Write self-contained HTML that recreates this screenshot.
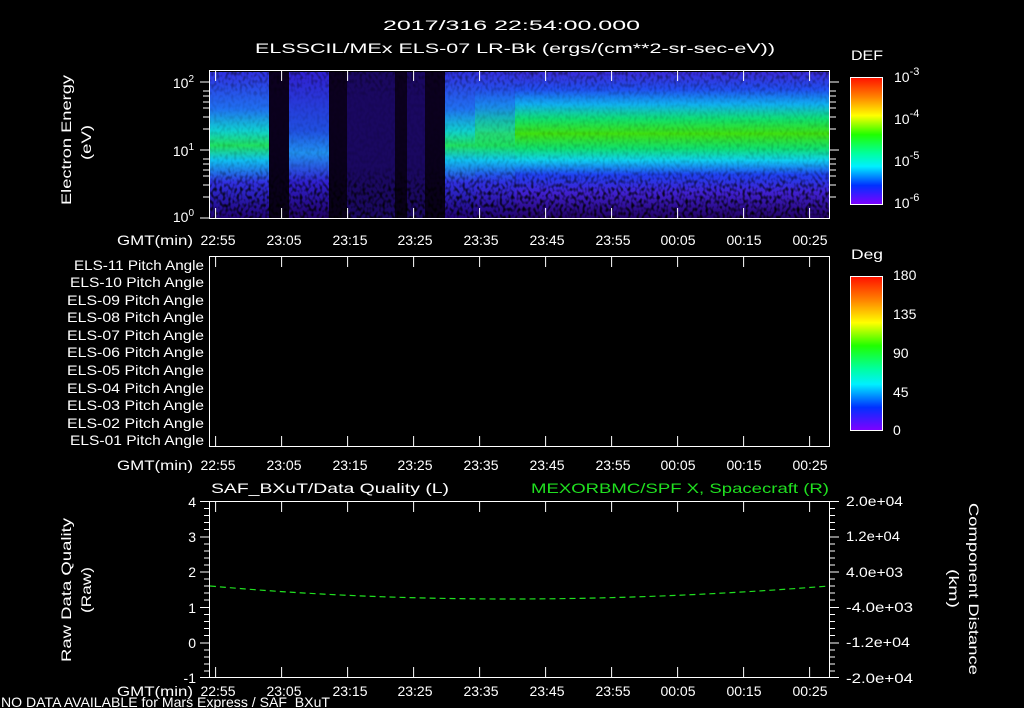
<!DOCTYPE html>
<html><head><meta charset="utf-8"><style>
html,body{margin:0;padding:0;background:#000;}
svg{display:block;}
text{font-family:"Liberation Sans",sans-serif;fill:#fff;font-size:14px;}
</style></head><body>
<svg width="1024" height="708" viewBox="0 0 1024 708" xmlns="http://www.w3.org/2000/svg">
<defs>
<pattern id="tkT" x="209" y="0" width="6.6" height="708" patternUnits="userSpaceOnUse"><rect x="0" y="0" width="1" height="6" fill="#fff"/></pattern>
<pattern id="tkB" x="209" y="0" width="6.6" height="708" patternUnits="userSpaceOnUse"><rect x="0" y="0" width="1" height="6" fill="#fff"/></pattern>
<linearGradient id="cb" x1="0" y1="0" x2="0" y2="1">
<stop offset="0" stop-color="#ff1000"/><stop offset="0.15" stop-color="#ff8000"/><stop offset="0.3" stop-color="#ffff00"/><stop offset="0.45" stop-color="#20ff00"/><stop offset="0.6" stop-color="#00ffa0"/><stop offset="0.7" stop-color="#00f0ff"/><stop offset="0.85" stop-color="#0030ff"/><stop offset="1" stop-color="#8000ff"/></linearGradient>
<linearGradient id="gB" x1="0" y1="0" x2="0" y2="1">
<stop offset="0" stop-color="#3a2ad8"/><stop offset="0.12" stop-color="#2050f0"/><stop offset="0.22" stop-color="#10b0f0"/><stop offset="0.32" stop-color="#10e070"/><stop offset="0.42" stop-color="#40e010"/><stop offset="0.52" stop-color="#10e070"/><stop offset="0.6" stop-color="#10d0f0"/><stop offset="0.7" stop-color="#2040f0"/><stop offset="0.82" stop-color="#4020d0"/><stop offset="1" stop-color="#200060"/></linearGradient>
<linearGradient id="gL" x1="0" y1="0" x2="0" y2="1">
<stop offset="0" stop-color="#3030e0"/><stop offset="0.25" stop-color="#2070f0"/><stop offset="0.4" stop-color="#10d0d0"/><stop offset="0.5" stop-color="#20e060"/><stop offset="0.6" stop-color="#10c0f0"/><stop offset="0.75" stop-color="#3030e0"/><stop offset="1" stop-color="#200070"/></linearGradient>
<linearGradient id="gM" x1="0" y1="0" x2="0" y2="1">
<stop offset="0" stop-color="#3020d0"/><stop offset="0.4" stop-color="#2050e0"/><stop offset="0.55" stop-color="#2090f0"/><stop offset="0.75" stop-color="#3020d0"/><stop offset="1" stop-color="#200060"/></linearGradient>
<linearGradient id="gD" x1="0" y1="0" x2="0" y2="1">
<stop offset="0" stop-color="#0c0020"/><stop offset="1" stop-color="#080018"/></linearGradient>
<filter id="nz" x="0" y="0" width="100%" height="100%">
<feTurbulence type="fractalNoise" baseFrequency="0.35 0.25" numOctaves="1" seed="3"/>
<feColorMatrix type="matrix" values="0 0 0 0 0  0 0 0 0 0  0 0 0 0 0  0 0 0 -3 1.7"/>
</filter>
<linearGradient id="mk" x1="0" y1="0" x2="0" y2="1"><stop offset="0" stop-color="#fff" stop-opacity="0.5"/><stop offset="0.2" stop-color="#fff" stop-opacity="0.1"/><stop offset="0.65" stop-color="#fff" stop-opacity="0.15"/><stop offset="0.8" stop-color="#fff" stop-opacity="0.8"/><stop offset="1" stop-color="#fff" stop-opacity="1"/></linearGradient>
<mask id="mm"><rect x="209" y="70" width="621" height="149" fill="url(#mk)"/></mask>
</defs>

<text x="383" y="30" font-size="16" textLength="257" lengthAdjust="spacingAndGlyphs">2017/316 22:54:00.000</text>
<text x="255" y="53" font-size="16" textLength="520" lengthAdjust="spacingAndGlyphs">ELSSCIL/MEx ELS-07 LR-Bk  (ergs/(cm**2-sr-sec-eV))</text>

<!-- spectrogram -->
<rect x="209" y="72" width="621" height="147" fill="url(#gB)"/>
<rect x="209" y="72" width="60" height="147" fill="url(#gL)"/>
<rect x="269" y="72" width="20" height="147" fill="url(#gD)"/>
<rect x="289" y="72" width="40" height="147" fill="url(#gM)"/>
<rect x="329" y="72" width="18" height="147" fill="url(#gD)"/>
<rect x="347" y="72" width="48" height="147" fill="#1a0860"/>
<rect x="395" y="72" width="12" height="147" fill="url(#gD)"/>
<rect x="407" y="72" width="18" height="147" fill="#1a0860"/>
<rect x="425" y="72" width="20" height="147" fill="url(#gD)"/>
<rect x="445" y="72" width="30" height="147" fill="url(#gL)"/>
<rect x="475" y="72" width="40" height="147" fill="url(#gL)" opacity="0.6"/>
<rect x="209" y="70" width="621" height="149" filter="url(#nz)" mask="url(#mm)"/>

<!-- panel frames -->
<rect x="209.5" y="70.5" width="620" height="148" fill="none" stroke="#fff"/>
<rect x="209.5" y="256.5" width="620" height="190" fill="none" stroke="#fff"/>
<rect x="209.5" y="501.5" width="620" height="176" fill="none" stroke="#fff"/>
<rect x="209" y="71" width="621" height="6" fill="url(#tkT)"/>
<rect x="209" y="212" width="621" height="6" fill="url(#tkB)"/>
<rect x="209" y="257" width="621" height="6" fill="url(#tkT)"/>
<rect x="209" y="440" width="621" height="6" fill="url(#tkB)"/>
<rect x="209" y="502" width="621" height="6" fill="url(#tkT)"/>
<rect x="209" y="671" width="621" height="6" fill="url(#tkB)"/>
<g stroke="#fff" stroke-width="1">
<path d="M215.6 71v10M281.6 71v10M347.6 71v10M413.6 71v10M479.6 71v10M545.6 71v10M611.6 71v10M677.6 71v10M743.6 71v10M809.6 71v10 M215.6 218v-10M281.6 218v-10M347.6 218v-10M413.6 218v-10M479.6 218v-10M545.6 218v-10M611.6 218v-10M677.6 218v-10M743.6 218v-10M809.6 218v-10"/>
<path d="M215.6 257v10M281.6 257v10M347.6 257v10M413.6 257v10M479.6 257v10M545.6 257v10M611.6 257v10M677.6 257v10M743.6 257v10M809.6 257v10 M215.6 446v-10M281.6 446v-10M347.6 446v-10M413.6 446v-10M479.6 446v-10M545.6 446v-10M611.6 446v-10M677.6 446v-10M743.6 446v-10M809.6 446v-10"/>
<path d="M215.6 502v10M281.6 502v10M347.6 502v10M413.6 502v10M479.6 502v10M545.6 502v10M611.6 502v10M677.6 502v10M743.6 502v10M809.6 502v10 M215.6 677v-10M281.6 677v-10M347.6 677v-10M413.6 677v-10M479.6 677v-10M545.6 677v-10M611.6 677v-10M677.6 677v-10M743.6 677v-10M809.6 677v-10"/>
<path d="M200 218h9M200 82h9M200 150h9M203 197h6M203 185h6M203 176h6M203 170h6M203 164h6M203 159h6M203 129h6M203 117h6M203 108h6M203 102h6M203 96h6M203 91h6"/>
<path d="M830 82h9M830 150h9M830 197h6M830 185h6M830 176h6M830 170h6M830 164h6M830 159h6M830 129h6M830 117h6M830 108h6M830 102h6M830 96h6M830 91h6"/>
<path d="M200 501.5h9M200 537h9M200 572h9M200 607.5h9M200 643h9M200 677.5h9 M204 508.5h5M204 515.5h5M204 522.5h5M204 529.5h5M204 544h5M204 551h5M204 558h5M204 565h5M204 579h5M204 586h5M204 593h5M204 600h5M204 614.5h5M204 621.5h5M204 628.5h5M204 635.5h5M204 650h5M204 657h5M204 664h5M204 671h5"/>
<path d="M830 501.5h9M830 537h9M830 572h9M830 607.5h9M830 643h9M830 677.5h9 M830 508.5h5M830 515.5h5M830 522.5h5M830 529.5h5M830 544h5M830 551h5M830 558h5M830 565h5M830 579h5M830 586h5M830 593h5M830 600h5M830 614.5h5M830 621.5h5M830 628.5h5M830 635.5h5M830 650h5M830 657h5M830 664h5M830 671h5"/>
</g>
<path d="M210 586 Q 500 612 829 586" fill="none" stroke="#20e020" stroke-width="1.2" stroke-dasharray="6 4"/>

<text x="194" y="88" text-anchor="end">10<tspan dy="-6" font-size="10">2</tspan></text>
<text x="194" y="156" text-anchor="end">10<tspan dy="-6" font-size="10">1</tspan></text>
<text x="194" y="222" text-anchor="end">10<tspan dy="-6" font-size="10">0</tspan></text>
<text transform="translate(71,205) rotate(-90)" font-size="15" textLength="130" lengthAdjust="spacingAndGlyphs">Electron Energy</text>
<text transform="translate(91,160) rotate(-90)" font-size="15" textLength="35" lengthAdjust="spacingAndGlyphs">(eV)</text>

<g font-size="14">
<text x="117" y="245" textLength="76" lengthAdjust="spacingAndGlyphs">GMT(min)</text>
<text x="218" y="245" text-anchor="middle">22:55</text><text x="284" y="245" text-anchor="middle">23:05</text><text x="350" y="245" text-anchor="middle">23:15</text><text x="415" y="245" text-anchor="middle">23:25</text><text x="481" y="245" text-anchor="middle">23:35</text><text x="547" y="245" text-anchor="middle">23:45</text><text x="613" y="245" text-anchor="middle">23:55</text><text x="678" y="245" text-anchor="middle">00:05</text><text x="744" y="245" text-anchor="middle">00:15</text><text x="810" y="245" text-anchor="middle">00:25</text>
<text x="117" y="470" textLength="76" lengthAdjust="spacingAndGlyphs">GMT(min)</text>
<text x="218" y="470" text-anchor="middle">22:55</text><text x="284" y="470" text-anchor="middle">23:05</text><text x="350" y="470" text-anchor="middle">23:15</text><text x="415" y="470" text-anchor="middle">23:25</text><text x="481" y="470" text-anchor="middle">23:35</text><text x="547" y="470" text-anchor="middle">23:45</text><text x="613" y="470" text-anchor="middle">23:55</text><text x="678" y="470" text-anchor="middle">00:05</text><text x="744" y="470" text-anchor="middle">00:15</text><text x="810" y="470" text-anchor="middle">00:25</text>
<text x="117" y="696" textLength="76" lengthAdjust="spacingAndGlyphs">GMT(min)</text>
<text x="218" y="696" text-anchor="middle">22:55</text><text x="284" y="696" text-anchor="middle">23:05</text><text x="350" y="696" text-anchor="middle">23:15</text><text x="415" y="696" text-anchor="middle">23:25</text><text x="481" y="696" text-anchor="middle">23:35</text><text x="547" y="696" text-anchor="middle">23:45</text><text x="613" y="696" text-anchor="middle">23:55</text><text x="678" y="696" text-anchor="middle">00:05</text><text x="744" y="696" text-anchor="middle">00:15</text><text x="810" y="696" text-anchor="middle">00:25</text>
</g>

<g font-size="13">
<text x="74" y="270" textLength="130" lengthAdjust="spacingAndGlyphs">ELS-11 Pitch Angle</text>
<text x="70" y="287" textLength="134" lengthAdjust="spacingAndGlyphs">ELS-10 Pitch Angle</text>
<text x="67" y="305" textLength="137" lengthAdjust="spacingAndGlyphs">ELS-09 Pitch Angle</text>
<text x="67" y="322" textLength="137" lengthAdjust="spacingAndGlyphs">ELS-08 Pitch Angle</text>
<text x="67" y="340" textLength="137" lengthAdjust="spacingAndGlyphs">ELS-07 Pitch Angle</text>
<text x="67" y="357" textLength="137" lengthAdjust="spacingAndGlyphs">ELS-06 Pitch Angle</text>
<text x="67" y="375" textLength="137" lengthAdjust="spacingAndGlyphs">ELS-05 Pitch Angle</text>
<text x="67" y="393" textLength="137" lengthAdjust="spacingAndGlyphs">ELS-04 Pitch Angle</text>
<text x="67" y="410" textLength="137" lengthAdjust="spacingAndGlyphs">ELS-03 Pitch Angle</text>
<text x="67" y="428" textLength="137" lengthAdjust="spacingAndGlyphs">ELS-02 Pitch Angle</text>
<text x="70" y="445" textLength="134" lengthAdjust="spacingAndGlyphs">ELS-01 Pitch Angle</text>
</g>

<text x="851" y="60" font-size="16" textLength="32" lengthAdjust="spacingAndGlyphs">DEF</text>
<rect x="850.5" y="77.5" width="32" height="127" fill="url(#cb)" stroke="#fff"/>
<text x="894" y="82" font-size="16">10<tspan dy="-7" font-size="11">-3</tspan></text>
<text x="894" y="124" font-size="16">10<tspan dy="-7" font-size="11">-4</tspan></text>
<text x="894" y="166" font-size="16">10<tspan dy="-7" font-size="11">-5</tspan></text>
<text x="894" y="208" font-size="16">10<tspan dy="-7" font-size="11">-6</tspan></text>
<text x="851" y="259" font-size="16" textLength="32" lengthAdjust="spacingAndGlyphs">Deg</text>
<rect x="850.5" y="276.5" width="32" height="154" fill="url(#cb)" stroke="#fff"/>
<g font-size="16"><text x="893" y="280">180</text><text x="893" y="319">135</text><text x="893" y="358">90</text><text x="893" y="397">45</text><text x="893" y="435">0</text></g>

<text x="211" y="493" font-size="15" textLength="238" lengthAdjust="spacingAndGlyphs">SAF_BXuT/Data Quality (L)</text>
<text x="531" y="493" font-size="15" textLength="298" lengthAdjust="spacingAndGlyphs" style="fill:#20e020">MEXORBMC/SPF X, Spacecraft (R)</text>
<g font-size="14" text-anchor="end">
<text x="196" y="507">4</text><text x="196" y="542">3</text><text x="196" y="577">2</text><text x="196" y="613">1</text><text x="196" y="648">0</text><text x="196" y="683">-1</text>
</g>
<g font-size="13">
<text x="846" y="506" textLength="57" lengthAdjust="spacingAndGlyphs">2.0e+04</text>
<text x="846" y="541" textLength="54" lengthAdjust="spacingAndGlyphs">1.2e+04</text>
<text x="846" y="577" textLength="57" lengthAdjust="spacingAndGlyphs">4.0e+03</text>
<text x="846" y="612" textLength="67" lengthAdjust="spacingAndGlyphs">-4.0e+03</text>
<text x="846" y="647" textLength="64" lengthAdjust="spacingAndGlyphs">-1.2e+04</text>
<text x="846" y="683" textLength="67" lengthAdjust="spacingAndGlyphs">-2.0e+04</text>
</g>
<text transform="translate(71,662) rotate(-90)" font-size="15" textLength="144" lengthAdjust="spacingAndGlyphs">Raw Data Quality</text>
<text transform="translate(91,613) rotate(-90)" font-size="15" textLength="46" lengthAdjust="spacingAndGlyphs">(Raw)</text>
<text transform="translate(969,503) rotate(90)" font-size="15" textLength="172" lengthAdjust="spacingAndGlyphs">Component Distance</text>
<text transform="translate(949,569) rotate(90)" font-size="15" textLength="39" lengthAdjust="spacingAndGlyphs">(km)</text>
<text x="1" y="707" font-size="13" textLength="329" lengthAdjust="spacingAndGlyphs">NO DATA AVAILABLE for Mars  Express / SAF_BXuT</text>
</svg>
</body></html>
